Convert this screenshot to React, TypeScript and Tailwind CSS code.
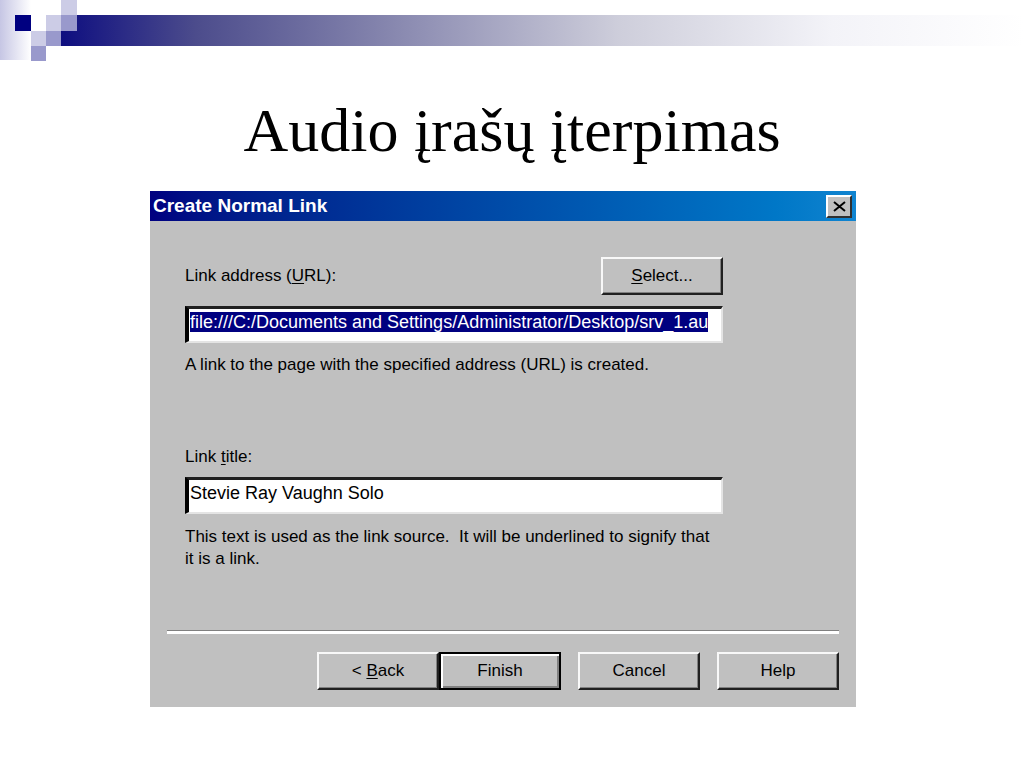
import { useEffect, useRef, type ReactNode } from 'react';

interface DialogButtonProps {
  children: ReactNode;
  isDefault?: boolean;
}

function DialogButton({ children, isDefault }: DialogButtonProps) {
  return (
    <button
      type="button"
      className={`w-[122px] h-[38px] text-[17px] leading-5 bg-[#c0c0c0] border-2 ${
        isDefault
          ? 'border-black shadow-[inset_2px_2px_#ffffff,inset_-2px_-2px_#808080]'
          : 'border-t-[#f8f8f8] border-l-[#f8f8f8] border-r-[#202020] border-b-[#202020] shadow-[inset_-1px_-1px_#808080]'
      }`}
    >
      {children}
    </button>
  );
}

function SlideHeader() {
  return (
    <header className="relative h-[61px] pt-[15px] pl-[61px]">
      <div className="h-[31px] bg-[linear-gradient(to_right,#0e0e80,#4c4c8c_14%,#8686ae_34%,#cecedb_58%,#f3f3f8_80%,#ffffff)]" />
      <svg
        className="absolute left-0 top-0"
        width="77"
        height="61"
        shapeRendering="crispEdges"
        aria-hidden="true"
      >
        <defs>
          <linearGradient id="edge">
            <stop offset="0" stopColor="#c6c6e4" />
            <stop offset="1" stopColor="#ffffff" />
          </linearGradient>
        </defs>
        <rect width="31" height="60" fill="url(#edge)" />
        <rect x="15" y="15" width="16" height="16" fill="#000080" />
        <rect x="61" y="0" width="16" height="15" fill="#cccce6" />
        <rect x="46" y="15" width="15" height="16" fill="#cccce6" />
        <rect x="31" y="31" width="15" height="15" fill="#cccce6" />
        <rect x="61" y="15" width="16" height="16" fill="#9999cc" />
        <rect x="46" y="31" width="15" height="15" fill="#9999cc" />
        <rect x="31" y="46" width="15" height="15" fill="#9999cc" />
      </svg>
    </header>
  );
}

const fieldClass =
  'block w-full pl-px pt-[3px] pb-[9px] text-lg leading-5 bg-white border-t-[3px] border-l-4 border-r-2 border-b-2 border-t-[#202020] border-l-black border-r-[#e4e4e4] border-b-[#e4e4e4] outline-none selection:bg-[#000080] selection:text-white';

function LinkDialog() {
  const urlRef = useRef<HTMLInputElement>(null);

  useEffect(() => {
    urlRef.current?.focus();
    urlRef.current?.select();
  }, []);

  return (
    <section className="bg-[#c0c0c0] text-[17px] leading-5 text-black font-['Liberation_Sans',sans-serif]">
      <div className="flex items-center justify-between h-[30px] pl-[3px] pr-1 bg-linear-to-r from-[#000080] to-[#1084d0]">
        <h2 className="text-[19px] leading-5 font-bold text-white">
          Create Normal Link
        </h2>
        <button
          type="button"
          aria-label="Close"
          className="flex items-center justify-center w-[26px] h-[23px] bg-[#c0c0c0] border-2 border-t-white border-l-white border-r-[#303030] border-b-[#303030]"
        >
          <svg width="13" height="11" viewBox="0 0 13 11" aria-hidden="true">
            <path d="M1 1l11 9M12 1L1 10" stroke="#000" strokeWidth="2" />
          </svg>
        </button>
      </div>

      <form className="pl-[35px] pr-[133px] pt-9">
        <div className="flex items-center justify-between">
          <label htmlFor="url">
            Link address (<u className="underline-offset-2">U</u>RL):
          </label>
          <DialogButton>
            <u className="underline-offset-2">S</u>elect...
          </DialogButton>
        </div>
        <input
          id="url"
          ref={urlRef}
          type="text"
          defaultValue="file:///C:/Documents and Settings/Administrator/Desktop/srv_1.au"
          className={`${fieldClass} mt-[11px]`}
        />
        <p className="mt-3">
          A link to the page with the specified address (URL) is created.
        </p>

        <label htmlFor="title" className="block mt-[72px]">
          Link <u className="underline-offset-2">t</u>itle:
        </label>
        <input
          id="title"
          type="text"
          defaultValue="Stevie Ray Vaughn Solo"
          className={`${fieldClass} mt-[10px]`}
        />
        <p className="mt-3 pr-2 leading-[22px]">
          This text is used as the link source.&nbsp; It will be underlined to
          signify that it is a link.
        </p>
      </form>

      <div className="px-[17px] pt-[60px] pb-[17px]">
        <hr className="border-t border-b-[3px] border-t-[#808080] border-b-white" />
        <div className="flex justify-end gap-[17px] mt-[18px]">
          <div className="flex">
            <DialogButton>
              &lt; <u className="underline-offset-2">B</u>ack
            </DialogButton>
            <DialogButton isDefault>Finish</DialogButton>
          </div>
          <DialogButton>Cancel</DialogButton>
          <DialogButton>Help</DialogButton>
        </div>
      </div>
    </section>
  );
}

export default function App() {
  return (
    <div className="min-h-screen bg-white">
      <SlideHeader />
      <main className="pl-[150px] pr-[168px] pb-[61px]">
        <h1 className="pt-[35px] pb-[27px] pl-[18px] text-center whitespace-nowrap text-[62px] leading-[68px] text-black font-['Liberation_Serif',serif]">
          Audio įrašų įterpimas
        </h1>
        <LinkDialog />
      </main>
    </div>
  );
}
